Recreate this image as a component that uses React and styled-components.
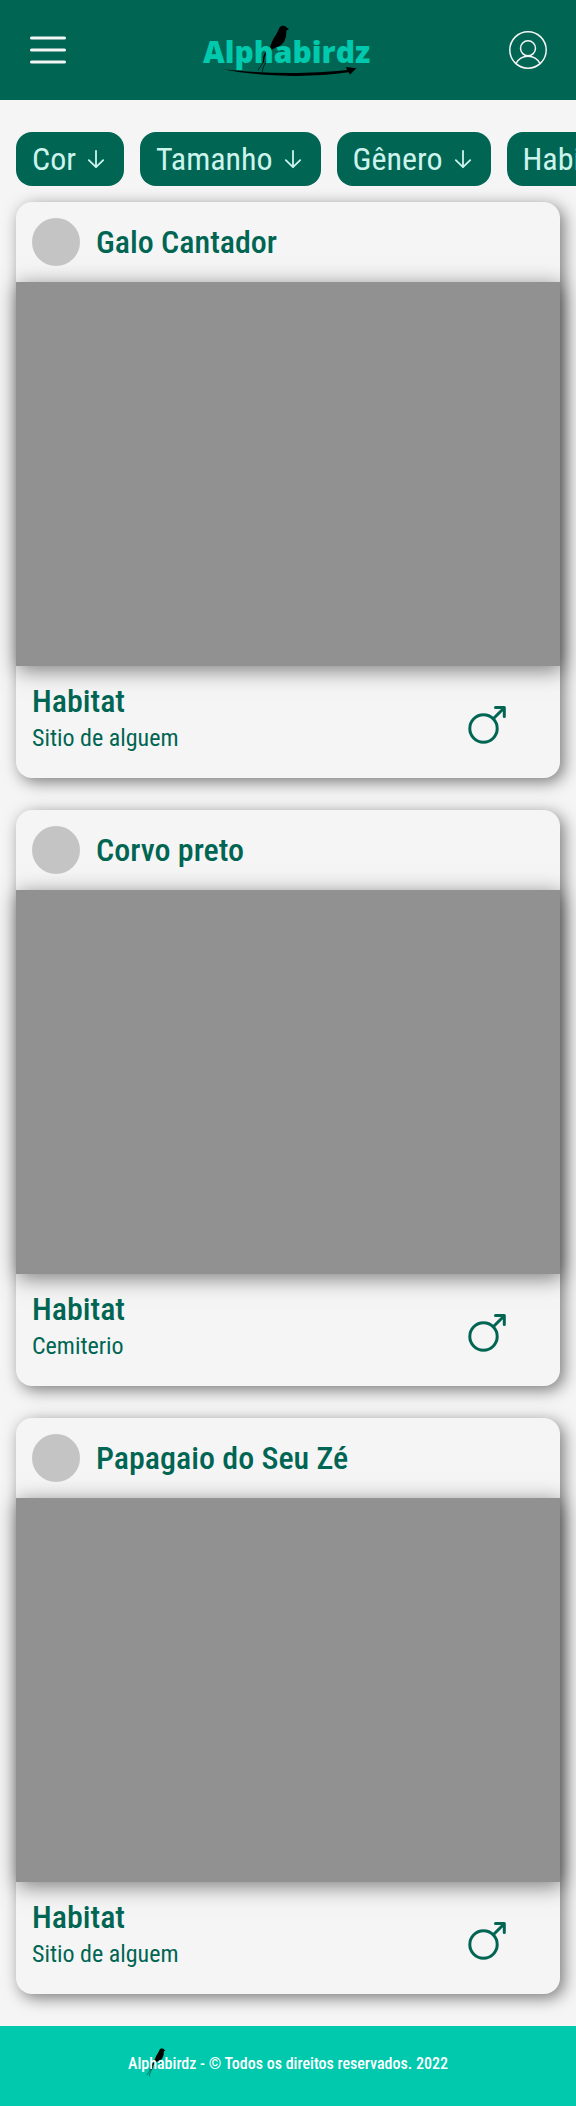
import React from "react";
import styled, { createGlobalStyle } from "styled-components";

const GlobalStyle = createGlobalStyle`
  *, *::before, *::after { box-sizing: border-box; }
  body {
    margin: 0;
    background: #f5f5f5;
    color: #006553;
    font-family: "Roboto Condensed", Roboto, "Liberation Sans", sans-serif;
    overflow-x: hidden;
  }
  h1, h2, h3, p { margin: 0; }
  button { font-family: inherit; border: 0; padding: 0; cursor: pointer; }
`;

const Header = styled.header`
  display: flex;
  align-items: center;
  justify-content: space-between;
  height: 100px;
  padding: 0 24px;
  background: #006553;
`;

const IconButton = styled.button`
  display: flex;
  background: none;
  color: #f5f5f5;
`;

const LogoLink = styled.a`
  display: block;
  height: 64px;
`;

const Filters = styled.nav`
  display: flex;
  gap: 16px;
  padding: 32px 16px 16px;
  overflow: hidden;
`;

const Chip = styled.button`
  display: flex;
  flex: none;
  align-items: center;
  gap: 8px;
  height: 54px;
  padding: 0 16px;
  border-radius: 16px;
  background: #006553;
  color: #ccf4ed;
  font-size: 32px;
  font-weight: 400;
  line-height: 38px;
`;

const Feed = styled.main`
  display: flex;
  flex-direction: column;
  gap: 32px;
  padding: 0 16px 32px;
`;

const Card = styled.article`
  border-radius: 16px;
  background: #f5f5f5;
  box-shadow: 4px 4px 16px rgba(0, 0, 0, 0.5);
`;

const CardHeader = styled.div`
  display: flex;
  align-items: center;
  gap: 16px;
  height: 80px;
  padding: 0 16px;
`;

const Avatar = styled.div`
  width: 48px;
  height: 48px;
  border-radius: 50%;
  background: #c4c4c4;
`;

const Title = styled.h2`
  font-size: 32px;
  line-height: 38px;
  font-weight: 500;
`;

const Photo = styled.div`
  height: 384px;
  background: #919191;
  box-shadow: 2px 4px 20px rgba(0, 0, 0, 0.5);
`;

const CardFooter = styled.div`
  display: flex;
  justify-content: space-between;
  height: 112px;
  padding: 16px 48px 0 16px;
`;

const Gender = styled.span`
  padding-top: 16px;
`;

const Place = styled.p`
  font-size: 24px;
  line-height: 28px;
  padding-top: 4px;
`;

const Footer = styled.footer`
  display: flex;
  align-items: center;
  justify-content: center;
  height: 80px;
  padding-bottom: 4px;
  background: #00c9ad;
  color: #ffffff;
`;

const Copyright = styled.p`
  position: relative;
  isolation: isolate;
  font-size: 16px;
  line-height: 20px;
  font-weight: 500;
`;

const FooterBird = styled.svg`
  position: absolute;
  z-index: -1;
  left: 18px;
  top: -6px;
`;

const BirdShape = () => (
  <>
    <path d="M268 54 C271 48 278 46 285 49 C289 51 291 54 297 58 L290 61 C288 66 289 72 288 79 C286 90 281 99 273 105 C265 110 257 113 250 116 L241 122 L237 131 C236 141 232 150 227 159 L229 140 L231 128 C226 134 223 142 222 158 L219 157 C218 145 220 134 227 126 L238 117 C242 109 244 98 250 87 C256 77 263 67 268 54 Z" />
    <path d="M221 156 L204 181 M227 157 C221 167 218 175 217 186 M262 110 L268 117 M263 115 L275 118 M270 108 L274 122" fill="none" stroke="currentColor" strokeWidth="2" />
  </>
);

const Logo = () => (
  <svg width="176" height="64" viewBox="200 18 176 64" role="img" aria-label="Alphabirdz">
    <g transform="translate(190 10) scale(0.3333)" color="#000">
      <BirdShape />
      <path d="M95 177 C210 192 360 193 471 180 L468 171 L499 175 L480 194 L476 187 C360 204 210 201 95 177 Z" />
    </g>
    <text x="203" y="63" fontFamily="Open Sans, sans-serif" fontWeight="800" fontSize="30" fill="#00c9ad">Alphabirdz</text>
  </svg>
);

const MenuIcon = () => (
  <svg width="48" height="48" viewBox="0 0 48 48" stroke="currentColor" strokeWidth="3" strokeLinecap="round" aria-hidden="true">
    <path d="M7.500 12 H40.500 M7.500 24 H40.500 M7.500 36 H40.500" />
  </svg>
);

const UserIcon = () => (
  <svg width="48" height="48" viewBox="0 0 48 48" fill="none" stroke="currentColor" strokeWidth="1.500" strokeLinecap="round" aria-hidden="true">
    <circle cx="24" cy="24" r="18.200" />
    <circle cx="24" cy="22.300" r="7.500" />
    <path d="M12 37.500 A13.500 13.500 0 0 1 36 37.500" />
  </svg>
);

const ArrowIcon = () => (
  <svg width="24" height="24" viewBox="0 0 24 24" fill="none" stroke="currentColor" strokeWidth="1.800" strokeLinecap="round" strokeLinejoin="round" aria-hidden="true">
    <path d="M12 3.800 V20.200 M4.800 13.200 L12 20.200 L19.200 13.200" />
  </svg>
);

const MaleIcon = () => (
  <svg width="48" height="48" viewBox="0 0 48 48" fill="none" stroke="currentColor" strokeWidth="3" strokeLinecap="round" strokeLinejoin="round" role="img" aria-label="Macho">
    <circle cx="19.500" cy="30.500" r="13.700" />
    <path d="M29.300 20.700 L40 10 M31.500 9.500 H40.300 V18.500" />
  </svg>
);

const filters = ["Cor", "Tamanho", "Gênero", "Habitat"];

const birds = [
  { name: "Galo Cantador", place: "Sitio de alguem" },
  { name: "Corvo preto", place: "Cemiterio" },
  { name: "Papagaio do Seu Zé", place: "Sitio de alguem" },
];

export default function App() {
  return (
    <>
      <GlobalStyle />
      <Header>
        <IconButton aria-label="Menu"><MenuIcon /></IconButton>
        <LogoLink href="#"><Logo /></LogoLink>
        <IconButton aria-label="Perfil"><UserIcon /></IconButton>
      </Header>
      <Filters>
        {filters.map((label) => (
          <Chip key={label}>{label}<ArrowIcon /></Chip>
        ))}
      </Filters>
      <Feed>
        {birds.map((bird) => (
          <Card key={bird.name}>
            <CardHeader>
              <Avatar />
              <Title>{bird.name}</Title>
            </CardHeader>
            <Photo />
            <CardFooter>
              <div>
                <Title as="h3">Habitat</Title>
                <Place>{bird.place}</Place>
              </div>
              <Gender><MaleIcon /></Gender>
            </CardFooter>
          </Card>
        ))}
      </Feed>
      <Footer>
        <Copyright>
          Alphabirdz - © Todos os direitos reservados. 2022
          <FooterBird width="20" height="29" viewBox="200 45 100 145" color="#000" aria-hidden="true"><BirdShape /></FooterBird>
        </Copyright>
      </Footer>
    </>
  );
}
